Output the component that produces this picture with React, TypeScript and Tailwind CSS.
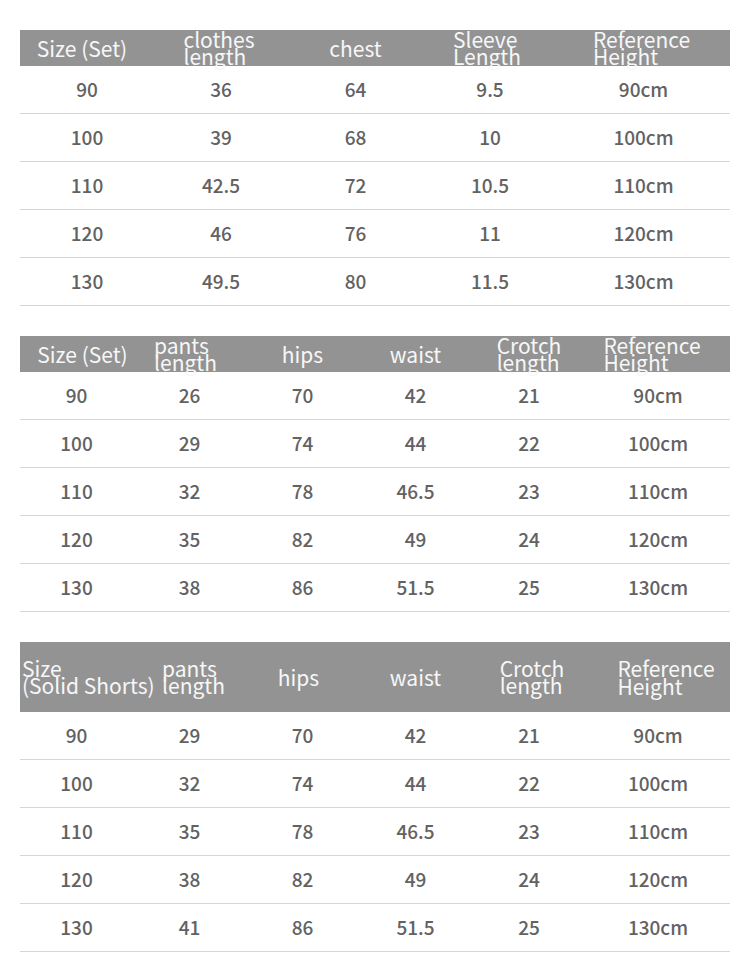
type Head = { lines: string[]; cls?: string };

const top: Head[] = [
  { lines: ["Size (Set)"], cls: "pr-[10px]" },
  { lines: ["clothes", "length"], cls: "pr-[4px]" },
  { lines: ["chest"] },
  { lines: ["Sleeve", "Length"], cls: "pr-[6px]" },
  { lines: ["Reference", "Height"], cls: "pr-[4px]" },
];

const pants: Head[] = [
  { lines: ["Size (Set)"], cls: "pl-[12px]" },
  { lines: ["pants", "length"], cls: "pr-[8px]" },
  { lines: ["hips"] },
  { lines: ["waist"] },
  { lines: ["Crotch", "length"] },
  { lines: ["Reference", "Height"], cls: "pr-[12px]" },
];

const shorts: Head[] = [
  { lines: ["Size", "(Solid Shorts)"], cls: "justify-start pl-[2px] leading-[16px]" },
  { lines: ["pants", "length"], cls: "pl-[8px]" },
  { lines: ["hips"], cls: "pr-[8px]" },
  { lines: ["waist"] },
  { lines: ["Crotch", "length"], cls: "pl-[6px]" },
  { lines: ["Reference", "Height"], cls: "pl-[16px] leading-[18px]" },
];

const topRows = [
  ["90", "36", "64", "9.5", "90cm"],
  ["100", "39", "68", "10", "100cm"],
  ["110", "42.5", "72", "10.5", "110cm"],
  ["120", "46", "76", "11", "120cm"],
  ["130", "49.5", "80", "11.5", "130cm"],
];

const pantsRows = [
  ["90", "26", "70", "42", "21", "90cm"],
  ["100", "29", "74", "44", "22", "100cm"],
  ["110", "32", "78", "46.5", "23", "110cm"],
  ["120", "35", "82", "49", "24", "120cm"],
  ["130", "38", "86", "51.5", "25", "130cm"],
];

const shortsRows = [
  ["90", "29", "70", "42", "21", "90cm"],
  ["100", "32", "74", "44", "22", "100cm"],
  ["110", "35", "78", "46.5", "23", "110cm"],
  ["120", "38", "82", "49", "24", "120cm"],
  ["130", "41", "86", "51.5", "25", "130cm"],
];

function SizeTable({
  heads,
  rows,
  widths,
  headH,
}: {
  heads: Head[];
  rows: string[][];
  widths: string[];
  headH: string;
}) {
  return (
    <div className="w-[710px] ml-[20px]">
      <div className={`flex bg-[#939393] text-[#f7f7f7] text-[21px] ${headH}`}>
        {heads.map((h, i) => (
          <div key={i} className={`flex items-center justify-center leading-[17px] ${widths[i]} ${h.cls ?? ""}`}>
            <div className="text-left whitespace-nowrap">
              {h.lines.map((l) => (
                <div key={l}>{l}</div>
              ))}
            </div>
          </div>
        ))}
      </div>
      {rows.map((r, ri) => (
        <div key={ri} className="flex h-[48px] border-b border-[#d6d6d6] text-[19px] font-medium text-[#626262]">
          {r.map((c, ci) => (
            <div key={ci} className={`flex items-center justify-center ${widths[ci]}`}>
              {c}
            </div>
          ))}
        </div>
      ))}
    </div>
  );
}

export default function App() {
  const five = ["w-[134px]", "w-[134px]", "w-[135px]", "w-[134px]", "w-[173px]"];
  const six = ["w-[113px]", "w-[113px]", "w-[113px]", "w-[113px]", "w-[114px]", "w-[144px]"];
  return (
    <div
      className="w-[750px] h-[953px] bg-white pt-[30px] overflow-hidden"
      style={{ fontFamily: '"Noto Sans CJK SC", "Noto Sans", sans-serif' }}
    >
      <SizeTable heads={top} rows={topRows} widths={five} headH="h-[36px]" />
      <div className="h-[30px]" />
      <SizeTable heads={pants} rows={pantsRows} widths={six} headH="h-[36px]" />
      <div className="h-[30px]" />
      <SizeTable heads={shorts} rows={shortsRows} widths={six} headH="h-[70px]" />
    </div>
  );
}
